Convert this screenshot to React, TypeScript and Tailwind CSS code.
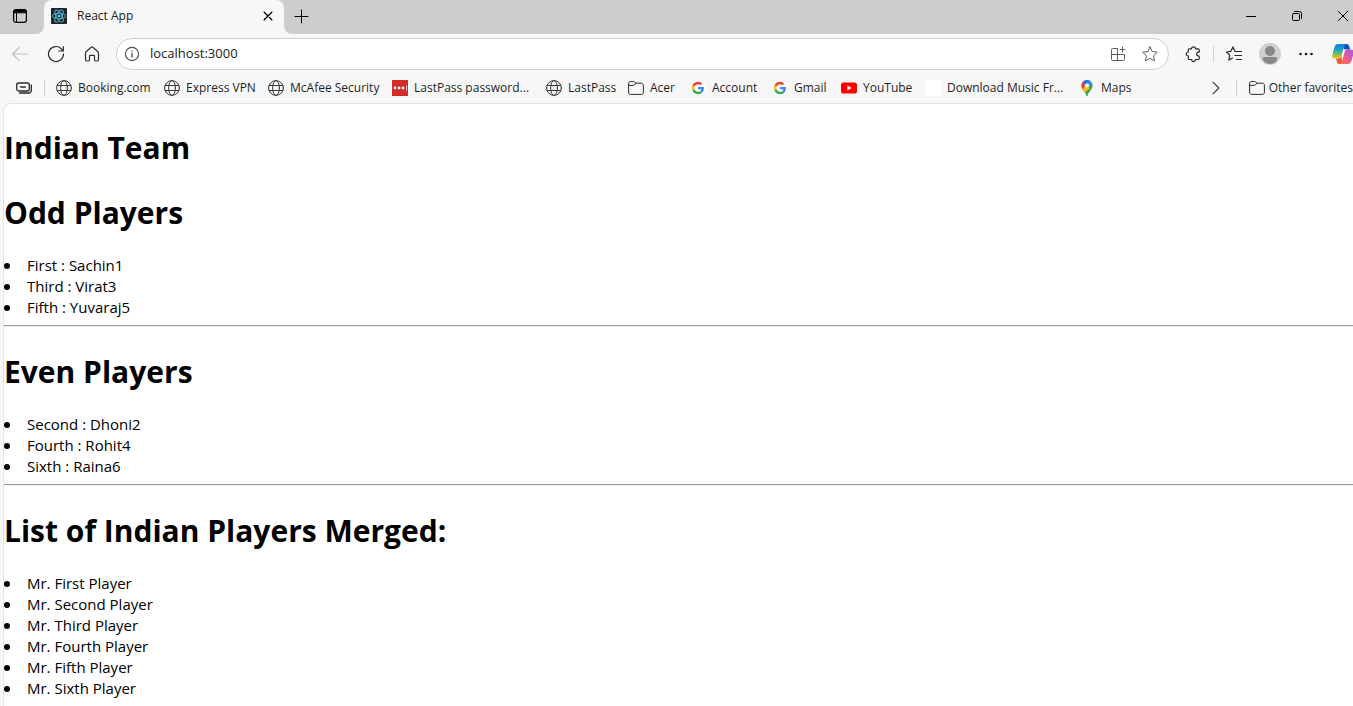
import type { ReactNode } from "react";

type IconProps = { size?: number; children: ReactNode; className?: string };

function Line({ size = 16, children, className = "" }: IconProps) {
  return (
    <svg
      width={size}
      height={size}
      viewBox={`0 0 ${size} ${size}`}
      fill="none"
      stroke="currentColor"
      strokeLinecap="round"
      strokeLinejoin="round"
      className={`shrink-0 ${className}`}
      aria-hidden="true"
    >
      {children}
    </svg>
  );
}

const Globe = () => (
  <Line className="text-[#3c3c3c]">
    <circle cx="8" cy="8" r="7.4" />
    <ellipse cx="8" cy="8" rx="3.4" ry="7.4" />
    <path d="M1.2 5.5h13.6M1.2 10.5h13.6" />
  </Line>
);

const Folder = () => (
  <Line className="text-[#2b2b2b]">
    <path d="M.6 3.500c0-1.200.8-2 2-2h2.900c.5 0 .9.2 1.200.5l1.200 1.200h5.500c1.200 0 2 .8 2 2v7.200c0 1.200-.8 2-2 2H2.600c-1.200 0-2-.8-2-2z" />
    <path d="M.6 5.400h4.600c.5 0 .9-.2 1.200-.5l1.500-1.700" />
  </Line>
);

const Google = () => (
  <svg width="16" height="16" viewBox="-7 -7 62 62" className="shrink-0" aria-hidden="true">
    <circle cx="24" cy="24" r="31" fill="#fff" />
    <path fill="#ea4335" d="M24 9.500c3.540 0 6.710 1.220 9.210 3.600l6.850-6.850C35.900 2.380 30.470 0 24 0 14.620 0 6.510 5.380 2.560 13.220l7.980 6.190C12.430 13.720 17.740 9.500 24 9.500z" />
    <path fill="#4285f4" d="M46.980 24.550c0-1.570-.15-3.090-.38-4.550H24v9.020h12.940c-.58 2.960-2.260 5.480-4.780 7.180l7.730 6c4.510-4.180 7.090-10.360 7.090-17.650z" />
    <path fill="#fbbc05" d="M10.530 28.590c-.48-1.450-.76-2.990-.76-4.590s.27-3.140.76-4.590l-7.980-6.190C.92 16.460 0 20.120 0 24c0 3.880.92 7.540 2.560 10.780l7.970-6.190z" />
    <path fill="#34a853" d="M24 48c6.480 0 11.930-2.130 15.890-5.810l-7.730-6c-2.150 1.450-4.920 2.300-8.160 2.300-6.260 0-11.570-4.220-13.470-9.910l-7.980 6.190C6.510 42.620 14.620 48 24 48z" />
  </svg>
);

const LastPass = () => (
  <svg width="16" height="16" viewBox="0 0 16 16" className="shrink-0" aria-hidden="true">
    <path fill="#d32d27" d="M0 0h16v16H0z" />
    <g fill="#fff">
      <circle cx="3" cy="8" r="1.400" />
      <circle cx="7" cy="8" r="1.400" />
      <circle cx="11" cy="8" r="1.400" />
      <path d="M14 5.500h.8v5H14z" />
    </g>
  </svg>
);

const YouTube = () => (
  <svg width="16" height="16" viewBox="0 0 16 16" className="shrink-0" aria-hidden="true">
    <rect y="2.400" width="16" height="11.200" rx="2.600" fill="#f00" />
    <path d="M6.400 5.600v4.800L10.600 8z" fill="#fff" />
  </svg>
);

const Maps = () => (
  <svg width="16" height="16" viewBox="0 0 16 16" className="shrink-0" aria-hidden="true">
    <clipPath id="pin">
      <path d="M8 0a5.600 5.600 0 0 0-5.600 5.600c0 2.200 1 3.500 2.300 5.200C6 12.400 6.900 13.600 7.300 15.400c.2.800 1.200.8 1.400 0 .4-1.800 1.300-3 2.600-4.600 1.300-1.700 2.300-3 2.300-5.200A5.600 5.600 0 0 0 8 0z" />
    </clipPath>
    <g clipPath="url(#pin)">
      <path fill="#34a853" d="M0 0h16v16H0z" />
      <path fill="#fbbc04" d="M1 8.500 6 3l5 5-6.500 6z" />
      <path fill="#ea4335" d="M0 0h4l4 4-5.600 6.600H0z" />
      <path fill="#1a73e8" d="m3.300 1.500 4 3.400L13 0H3z" />
      <path fill="#4285f4" d="m9.500 0-4 5L9 8l5-5.500z" />
    </g>
    <circle cx="8" cy="5.600" r="2.100" fill="#fff" />
  </svg>
);

const ReactLogo = () => (
  <svg width="16" height="16" viewBox="0 0 16 16" className="shrink-0" aria-hidden="true">
    <rect width="16" height="16" rx="1" fill="#20232a" />
    <g fill="none" stroke="#53b9d3" strokeWidth=".9">
      <ellipse cx="8" cy="8" rx="6.800" ry="2.700" />
      <ellipse cx="8" cy="8" rx="6.800" ry="2.700" transform="rotate(60 8 8)" />
      <ellipse cx="8" cy="8" rx="6.800" ry="2.700" transform="rotate(120 8 8)" />
    </g>
    <circle cx="8" cy="8" r="1.300" fill="#61dafb" />
  </svg>
);

const Copilot = () => (
  <svg width="22" height="22" viewBox="0 0 22 22" className="shrink-0" aria-hidden="true">
    <defs>
      <linearGradient id="cpA" x1="0" y1="0" x2="0" y2="1">
        <stop offset="0" stopColor="#0d7fe0" />
        <stop offset=".4" stopColor="#1ba0c9" />
        <stop offset=".65" stopColor="#6cbd63" />
        <stop offset="1" stopColor="#f8c800" />
      </linearGradient>
      <linearGradient id="cpB" x1="1" y1="0" x2="0" y2="1">
        <stop offset="0" stopColor="#9a5cf0" />
        <stop offset=".5" stopColor="#e8559f" />
        <stop offset="1" stopColor="#ff7a3c" />
      </linearGradient>
    </defs>
    <path fill="#1450c4" d="M11 1h3.500c1.600 0 2.300 1 2.800 2.600l.9 3h-4.700c-1.400 0-2-.8-2.300-2z" />
    <path fill="url(#cpA)" d="M6.500 1H14c-1.300.4-1.700 1.500-2.100 3L9.600 12.400C9 14.500 8 15.600 5.800 15.600H3C.6 15.600-.2 14 .4 11.800l2-7.400C3 2.200 4.300 1 6.500 1z" />
    <path fill="#f0592b" d="M4 15.600h2.200c2 0 2.900-1 3.400-2.800l.6 8.200H7.400c-1.500 0-2.100-.8-2.500-2.200z" />
    <path fill="url(#cpB)" d="M15.500 6.600H19c2.400 0 3.200 1.600 2.600 3.800l-2 7.200c-.6 2.200-1.900 3.400-4.100 3.400H8c1.300-.4 1.700-1.500 2.100-3l2.300-8.200c.5-2.100 1.300-3.200 3.100-3.200z" />
  </svg>
);

const bookmarks: { label: string; icon: ReactNode; width: string }[] = [
  { label: "Booking.com", icon: <Globe />, width: "w-[108px]" },
  { label: "Express VPN", icon: <Globe />, width: "w-[104px]" },
  { label: "McAfee Security", icon: <Globe />, width: "w-[124px]" },
  { label: "LastPass password...", icon: <LastPass />, width: "w-[154px]" },
  { label: "LastPass", icon: <Globe />, width: "w-[82px]" },
  { label: "Acer", icon: <Folder />, width: "w-[62px]" },
  { label: "Account", icon: <Google />, width: "w-[82px]" },
  { label: "Gmail", icon: <Google />, width: "w-[69px]" },
  { label: "YouTube", icon: <YouTube />, width: "w-[84px]" },
  { label: "Download Music Fr...", icon: <span className="size-4 shrink-0 bg-white" />, width: "w-[154px]" },
  { label: "Maps", icon: <Maps />, width: "w-[72px]" },
];

function TabStrip() {
  return (
    <div className="flex h-[34px]">
      <div className="flex w-11 shrink-0 items-center rounded-br-lg bg-[#cdcdcd] pb-0.5 pl-3">
        <button aria-label="Tab actions" className="text-black">
          <Line>
            <rect x="1.600" y="1.600" width="12.800" height="12.800" rx="2.400" strokeWidth="1.200" />
            <path d="M1.600 4.400V4c0-1.500 1-2.400 2.400-2.400h8c1.500 0 2.400 1 2.400 2.400v.4z" fill="currentColor" />
            <path d="M4.500 5v9.400" />
          </Line>
        </button>
      </div>
      <div className="w-60 shrink-0 bg-linear-to-b from-[#cdcdcd] from-50% to-[#f7f7f7] to-50%">
        <div className="flex h-full items-center rounded-t-lg bg-[#f7f7f7] pr-2 pb-0.5 pl-[7px]">
          <ReactLogo />
          <span className="ml-2.5 grow text-xs text-[#1b1b1b]">React App</span>
          <button aria-label="Close tab" className="p-0 text-black">
            <Line>
              <path d="m4.200 4.200 7.600 7.600M11.800 4.200l-7.600 7.600" strokeWidth="1.300" />
            </Line>
          </button>
        </div>
      </div>
      <div className="flex grow items-center rounded-bl-lg bg-[#cdcdcd] pb-0.5 text-black">
        <button aria-label="New tab" className="ml-[9px]">
          <Line>
            <path d="M8.500 2v13M2 8.500h13" />
          </Line>
        </button>
        <div className="grow" />
        <button aria-label="Minimize" className="flex w-[46px] justify-center">
          <Line size={10}>
            <path d="M.5 5.500h9" />
          </Line>
        </button>
        <button aria-label="Restore" className="flex w-[46px] justify-center">
          <Line size={12}>
            <rect x="1.500" y="3.500" width="7" height="7" rx="1" />
            <path d="M3.500 1.500h5a2 2 0 0 1 2 2v5" />
          </Line>
        </button>
        <button aria-label="Close" className="flex w-[33px] pl-[17px]">
          <Line size={12}>
            <path d="m1.200 1.200 9.600 9.600M10.800 1.200l-9.600 9.600" />
          </Line>
        </button>
      </div>
    </div>
  );
}

function Toolbar() {
  const button = "flex w-9 shrink-0 items-center justify-center";
  return (
    <div className="flex h-10 items-center text-[#2b2b2b]">
      <div className="flex pl-0.5">
        <button aria-label="Back" className={`${button} text-[#bdbdbd]`}>
          <Line>
            <path d="M15.500 8H.7M7.300 1.300.7 8l6.600 6.700" strokeWidth="1.100" />
          </Line>
        </button>
        <button aria-label="Refresh" className={button}>
          <Line size={18}>
            <path d="M16.500 9a7.500 7.500 0 1 1-2.100-5.200L16.300 6M16.300 1.500V6h-4.600" strokeWidth="1.200" />
          </Line>
        </button>
        <button aria-label="Home" className={button}>
          <Line>
            <path d="M1.500 7.200c0-.6.2-1 .6-1.400l5-4.500c.5-.5 1.300-.5 1.800 0l5 4.500c.4.400.6.8.6 1.400v6.600c0 .7-.5 1.200-1.200 1.200h-1.600c-.7 0-1.200-.5-1.200-1.200v-3.600c0-.5-.3-.8-.8-.8H6.300c-.5 0-.8.300-.8.800v3.600c0 .7-.5 1.200-1.200 1.200H2.700c-.7 0-1.200-.5-1.200-1.200z" strokeWidth="1.200" />
          </Line>
        </button>
      </div>
      <div className="ml-1.5 flex h-8 grow items-center rounded-full border border-[#cfcfcf] bg-white pr-2.5 pl-[7px]">
        <Line className="text-[#4a4a4a]">
          <circle cx="8" cy="8" r="6.600" strokeWidth="1.100" />
          <path d="M8 7.300v3.700M8 5v.1" strokeWidth="1.300" />
        </Line>
        <input
          aria-label="Address"
          defaultValue="localhost:3000"
          className="ml-2.5 min-w-0 grow bg-transparent text-[13px] text-[#1b1b1b] outline-none"
        />
        <button aria-label="Install app" className="text-[#5f5f5f]">
          <Line>
            <path d="M7.500 2.500h-5c-.6 0-1 .4-1 1v10c0 .6.400 1 1 1h11c.6 0 1-.4 1-1v-5h-13M7.500 2.500v12M12.500 1v5M10 3.500h5" />
          </Line>
        </button>
        <button aria-label="Add to favorites" className="ml-4 text-[#5f5f5f]">
          <Line>
            <path d="m8 .9 2.200 4.600 5.100.7-3.700 3.500.9 5.100L8 12.400l-4.500 2.400.9-5.100L.7 6.200l5.100-.7z" />
          </Line>
        </button>
      </div>
      <div className="flex shrink-0 items-center pl-1.5">
        <button aria-label="Extensions" className={button}>
          <Line>
            <path d="M6.500 2.800a2 2 0 0 1 4 0h2.700c.6 0 1 .4 1 1v2.400h-.6a1.900 1.900 0 0 0 0 3.800h.6v2.500c0 .6-.4 1-1 1h-2.700a2 2 0 0 1-4 0H4.300c-.6 0-1-.4-1-1V10a2 2 0 0 1 0-4V3.800c0-.6.400-1 1-1z" strokeWidth="1.200" />
          </Line>
        </button>
        <span className="mr-0.5 ml-0.5 h-4 w-px bg-[#d0d0d0]" />
        <button aria-label="Favorites" className={button}>
          <Line>
            <path d="M10 5.500 8.900 5.300 6.900.9 4.800 5.300l-4.300.7 3.200 3.200-.8 4.900L6.500 12M10 5.500h5.500M9 9.500h6.500M10.500 13.500h5" strokeWidth="1.200" />
          </Line>
        </button>
        <button aria-label="Profile" className={button}>
          <svg width="22" height="22" viewBox="0 0 22 22" aria-hidden="true">
            <circle cx="11" cy="11" r="11" fill="#d2d0ce" />
            <circle cx="11" cy="8" r="5" fill="#8a8886" />
            <path d="M3.500 16c0-1.100.9-2 2-2h11c1.100 0 2 .9 2 2-1.500 3.200-4 5-7.500 5s-6-1.800-7.500-5z" fill="#8a8886" />
          </svg>
        </button>
        <button aria-label="Settings and more" className={button}>
          <svg width="16" height="16" viewBox="0 0 16 16" fill="#1b1b1b" aria-hidden="true">
            <circle cx="2.500" cy="8" r="1.300" />
            <circle cx="8" cy="8" r="1.300" />
            <circle cx="13.500" cy="8" r="1.300" />
          </svg>
        </button>
        <button aria-label="Copilot" className="flex w-[29px] overflow-hidden pl-2">
          <Copilot />
        </button>
      </div>
    </div>
  );
}

function BookmarksBar() {
  return (
    <nav aria-label="Favorites bar" className="flex h-[29px] items-center pb-px text-xs text-[#1f1f1f]">
      <button aria-label="Saved groups" className="ml-4 text-[#2b2b2b]">
        <Line>
          <rect x=".7" y="3" width="12.600" height="8" rx="2" strokeWidth="1.300" />
          <path d="M4.500 7h5M15.300 5v5.500a2.500 2.500 0 0 1-2.500 2.500H3.500" strokeWidth="1.300" />
        </Line>
      </button>
      <span className="mr-[11px] ml-3 h-4 w-px shrink-0 bg-[#d0d0d0]" />
      {bookmarks.map((b) => (
        <a key={b.label} href="#" className={`flex shrink-0 items-center gap-1.5 whitespace-nowrap ${b.width}`}>
          {b.icon}
          {b.label}
        </a>
      ))}
      <div className="grow" />
      <button aria-label="More favorites" className="text-[#3c3c3c]">
        <Line>
          <path d="m5 2.200 5.800 5.800L5 13.800" strokeWidth="1.200" />
        </Line>
      </button>
      <span className="mr-3 ml-3 h-4 w-px shrink-0 bg-[#d0d0d0]" />
      <a href="#" className="flex shrink-0 items-center gap-1 whitespace-nowrap">
        <Folder />
        Other favorites
      </a>
    </nav>
  );
}

function Heading({ children }: { children: ReactNode }) {
  return <h1 className="mt-[21px] mb-5 text-[30px] leading-[44px] font-bold">{children}</h1>;
}

function Players({ items }: { items: string[] }) {
  return (
    <ul>
      {items.map((item) => (
        <li key={item} className="flex items-center">
          <span className="mr-[17px] size-1.5 rounded-full bg-black" />
          {item}
        </li>
      ))}
    </ul>
  );
}

const Rule = () => <hr className="mt-[7px] mb-[23px] border-t border-b border-t-[#9a9a9a] border-b-[#eeeeee]" />;

export default function App() {
  return (
    <div className="flex min-h-screen flex-col bg-[#f7f7f7] font-['Open_Sans','Noto_Sans',sans-serif]">
      <header>
        <TabStrip />
        <Toolbar />
        <BookmarksBar />
      </header>
      <main className="ml-[3px] flow-root grow rounded-tl-lg border-t border-l border-[#e4e4e4] bg-white pt-px text-[15px] leading-[21px] text-black">
        <Heading>Indian Team</Heading>
        <Heading>Odd Players</Heading>
        <Players items={["First : Sachin1", "Third : Virat3", "Fifth : Yuvaraj5"]} />
        <Rule />
        <Heading>Even Players</Heading>
        <Players items={["Second : Dhoni2", "Fourth : Rohit4", "Sixth : Raina6"]} />
        <Rule />
        <Heading>List of Indian Players Merged:</Heading>
        <Players
          items={[
            "Mr. First Player",
            "Mr. Second Player",
            "Mr. Third Player",
            "Mr. Fourth Player",
            "Mr. Fifth Player",
            "Mr. Sixth Player",
          ]}
        />
      </main>
    </div>
  );
}
